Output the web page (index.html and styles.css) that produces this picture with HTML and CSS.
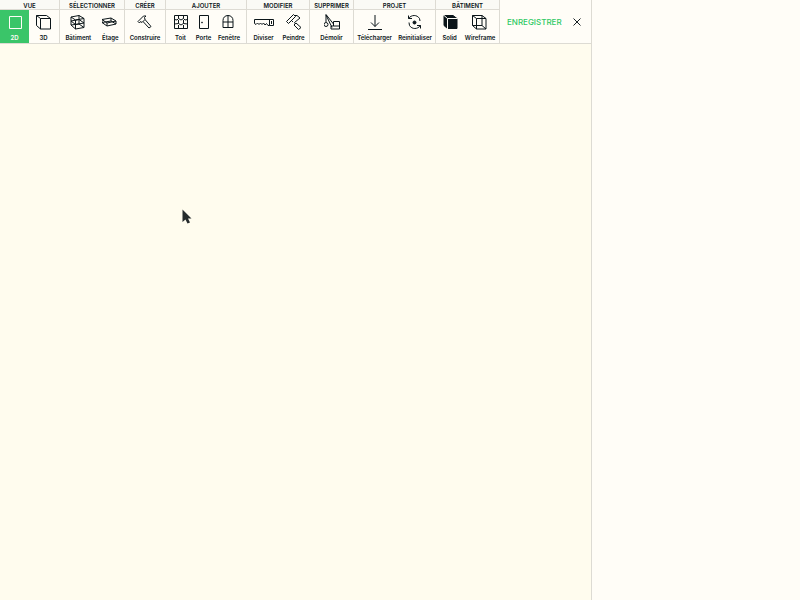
FILE: index.html
```html
<!DOCTYPE html>
<html lang="fr">
<head>
<meta charset="utf-8">
<title>Éditeur de bâtiment</title>
<link rel="stylesheet" href="styles.css">
</head>
<body>
<div class="app">
  <main class="editor">
    <header class="toolbar">
      <section class="group view">
        <h2 class="group-title">Vue</h2>
        <div class="tools">
          <button class="tool active" type="button"><svg class="icon" viewBox="0 0 16 16"><path d="M2.500 2.500H14.500V14.500H2.500Z"/></svg>2D</button>
          <button class="tool" type="button"><svg class="icon" viewBox="0 0 16 16"><path d="M4.500 4.500H14.500V15H4.500ZM4.500 4.500L0.500 1.500H10.500L14.500 4.500M0.500 1.500V11.500L4.500 15"/></svg>3D</button>
        </div>
      </section>
      <section class="group">
        <h2 class="group-title">Sélectionner</h2>
        <div class="tools">
          <button class="tool" type="button"><svg class="icon" viewBox="0 0 16 16"><path d="M1 3L9 1.500L14 4.500L5.500 6ZM1 3V11L5.500 15L14 13.500V4.500M5.500 6V15M1 7L5.500 10.500L14 9M9 1.500V10L14 13.500M1 7L9 5.500L14 9M1 11L9 10"/></svg>Bâtiment</button>
          <button class="tool" type="button"><svg class="icon" viewBox="0 0 16 16"><path d="M0 5.500L9 4L14 7L5 9ZM0 5.500V8.500L5 12L14 10V7M5 9V12M0 8.500L9 7L14 10M9 4V7"/></svg>Étage</button>
        </div>
      </section>
      <section class="group">
        <h2 class="group-title">Créer</h2>
        <div class="tools">
          <button class="tool" type="button"><svg class="icon" viewBox="0 0 16 16"><path d="M1 7.500L6.500 2H9L7.500 3.500L8 5.500L5 8.500L3.500 7.500L2.500 9ZM6 7.500L12 14L14 12.500L8 5.500"/></svg>Construire</button>
        </div>
      </section>
      <section class="group padded">
        <h2 class="group-title">Ajouter</h2>
        <div class="tools">
          <button class="tool" type="button"><svg class="icon" viewBox="0 0 16 16"><path d="M1.500 1.500H14.500V14.500H1.500ZM5.500 1.500V4.500L4 6L1.500 5.500M5.500 4.500L8 6L10.500 4.500V1.500M10.500 4.500L12 6L14.500 5.500M5.500 6V9.500L8 11L10.500 9.500V6M1.500 10L5.500 9.500M10.500 9.500L14.500 10M5.500 11V14.500M10.500 11V14.500"/></svg>Toit</button>
          <button class="tool" type="button"><svg class="icon" viewBox="0 0 16 16"><path d="M3.500 1.500H12.500V14.500H3.500Z"/><circle cx="6" cy="8.500" r="0.500"/></svg>Porte</button>
          <button class="tool" type="button"><svg class="icon" viewBox="0 0 16 16"><path d="M2 13.500V6.500C2 3.500 4 1.500 7 1.500S12 3.500 12 6.500V13.500ZM7 1.500V13.500M2 8H12"/></svg>Fenêtre</button>
        </div>
      </section>
      <section class="group inset">
        <h2 class="group-title">Modifier</h2>
        <div class="tools">
          <button class="tool" type="button"><svg class="icon wide" viewBox="0 0 20 16"><path d="M0.500 9.500V5.500H19.500V11.500H15.500V5.500M17.500 7V10M0.500 9.500L2 10.500L3.500 9L5 10.500L6.500 9L8 10.500L9.500 9L11 11L12.500 9.500L14 11.500H15.500"/></svg>Diviser</button>
          <button class="tool" type="button"><svg class="icon" viewBox="0 0 16 16"><path d="M0.500 7.500L7.500 0.500L9.500 2.500L2.500 9.500ZM8.500 1.500H11L14 4L8.500 8.500L9.500 10M5.500 6.500L7 8M8 11L10 9L15 13.500L12.500 15.500Z"/></svg>Peindre</button>
        </div>
      </section>
      <section class="group">
        <h2 class="group-title">Supprimer</h2>
        <div class="tools">
          <button class="tool" type="button"><svg class="icon" viewBox="0 0 16 16"><path d="M2 8V0.500L9.500 10M2 1L8 13.500M9.500 7.500H15.500V15H7V12H9.500V7.500M9.500 12H15.500"/><circle cx="2" cy="10.500" r="2"/></svg>Démolir</button>
        </div>
      </section>
      <section class="group">
        <h2 class="group-title">Projet</h2>
        <div class="tools">
          <button class="tool" type="button"><svg class="icon" viewBox="0 0 16 16"><path d="M8 1V12.500M4 8.500L8 12.500L12 8.500M1 15.500H15"/></svg>Télécharger</button>
          <button class="tool" type="button"><svg class="icon" viewBox="0 0 16 16"><path d="M1.500 1.500V4.500H5M1.500 4.500C4.500 0.500 10 0.500 12.500 4.500L13 7M13.500 14.500V11.500H10M13.500 11.500C10.500 15.500 5 15.500 2.500 11.500L2 8.500"/><circle class="solid" cx="7.500" cy="8.500" r="1.500"/></svg>Reinitialiser</button>
        </div>
      </section>
      <section class="group inset">
        <h2 class="group-title">Bâtiment</h2>
        <div class="tools">
          <button class="tool" type="button"><svg class="icon" viewBox="0 0 16 16"><path class="solid" d="M2 1.500H11L15 4.500V14.500H5.500L2 11.500Z"/><path class="edge" d="M1.500 1L5.500 4.500H15.500M5.500 4.500V15"/></svg>Solid</button>
          <button class="tool" type="button"><svg class="icon" viewBox="0 0 16 16"><path d="M4.500 4.500H14V15H4.500ZM0.500 1.500H10V11.500H0.500ZM0.500 1.500L4.500 4.500M10 1.500L14 4.500M0.500 11.500L4.500 15M10 11.500L14 15"/></svg>Wireframe</button>
        </div>
      </section>
      <div class="actions">
        <button class="save" type="button">Enregistrer</button>
        <button class="close" type="button" aria-label="Fermer"><svg class="close-icon" viewBox="0 0 8 8"><path d="M0.500 0.500L7.500 7.500M7.500 0.500L0.500 7.500"/></svg></button>
      </div>
    </header>
    <div class="canvas">
      <svg class="cursor" viewBox="0 0 10 15"><path d="M0.500 0.500V13L3.500 10.500L5.500 14.500L8 13.500L6 9.500H9.500Z"/></svg>
    </div>
  </main>
  <aside class="panel"></aside>
</div>
</body>
</html>
```

FILE: styles.css
```css
* {
  box-sizing: border-box;
}

body {
  margin: 0;
  font-family: Inter, "Liberation Sans", sans-serif;
  color: #0b1519;
}

button {
  margin: 0;
  padding: 0;
  border: 0;
  background: none;
  color: inherit;
  font: inherit;
}

.app {
  display: flex;
  min-height: 100vh;
  background: #fffdf7;
}

.editor {
  flex: 1;
  display: flex;
  flex-direction: column;
  border-right: 1px solid #dddbd3;
}

.panel {
  flex: 0 0 208px;
}

.toolbar {
  display: grid;
  grid-template-columns: 60px 65px 41px 81px 63px 44px 82px 64px 1fr;
  border-bottom: 1px solid #dddbd3;
  background: #fffdf7;
}

.group {
  display: flex;
  flex-direction: column;
  border-right: 1px solid #dddbd3;
}

.group-title {
  margin: 0;
  height: 10px;
  border-bottom: 1px solid #dddbd3;
  background: #fafaf5;
  font-size: 6px;
  line-height: 11px;
  font-weight: 600;
  text-align: center;
  text-transform: uppercase;
}

.tools {
  display: flex;
  height: 33px;
}

.padded .tools {
  padding: 0 3px;
}

.inset .tools {
  padding-left: 2px;
}

.tool {
  flex: 1 1 auto;
  min-width: 23px;
  padding: 4px 3px 0;
  display: flex;
  flex-direction: column;
  align-items: center;
  justify-content: flex-start;
  gap: 4px;
  font-size: 6px;
  line-height: 8px;
  font-weight: 600;
  white-space: nowrap;
}

.view .tool {
  flex: 0 0 29px;
}

.tool.active {
  background: #3ac569;
  color: #fffdf7;
}

.icon {
  width: 16px;
  height: 16px;
  fill: none;
  stroke: currentColor;
  stroke-width: 1;
}

.icon.wide {
  width: 20px;
}

.icon .solid {
  fill: currentColor;
}

.icon .edge {
  stroke: #fffdf7;
}

.actions {
  display: flex;
  align-items: center;
  justify-content: space-between;
  padding: 1px 10px 0 7px;
}

.save {
  color: #2fc965;
  font-size: 8px;
  line-height: 12px;
  font-weight: 500;
  text-transform: uppercase;
}

.close {
  display: flex;
}

.close-icon {
  width: 8px;
  height: 8px;
  fill: none;
  stroke: #182125;
}

.canvas {
  flex: 1;
  position: relative;
  background: #fffcee;
}

.cursor {
  position: absolute;
  left: 182px;
  top: 165px;
  width: 10px;
  height: 15px;
  fill: #252b2c;
}
```
